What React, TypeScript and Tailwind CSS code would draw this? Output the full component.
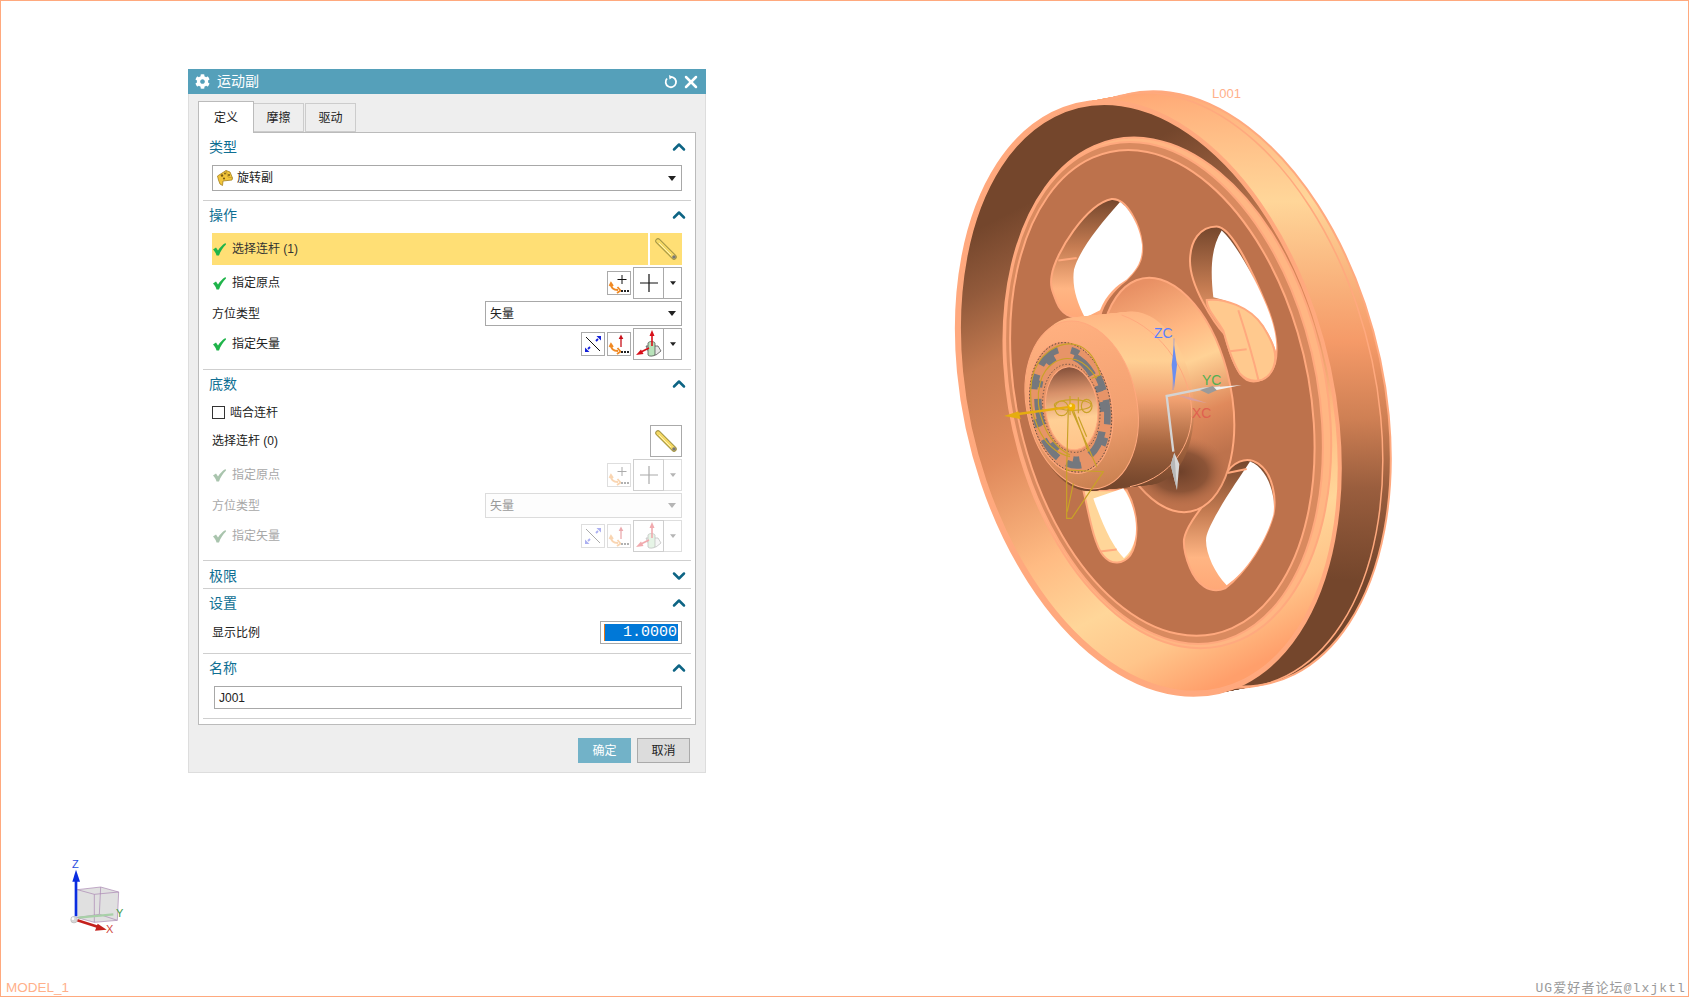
import { ChevronDown, ChevronUp, X } from 'lucide-react';
import { FaCog } from 'react-icons/fa';
import type { ReactNode } from 'react';

const edge = '#ffa97e';

function Rod() {
  return (
    <svg width="24" height="24" viewBox="0 0 24 24">
      <line x1="4" y1="4" x2="20" y2="20" stroke="#a39545" strokeWidth="5.500" strokeLinecap="round" />
      <line x1="4" y1="4" x2="20" y2="20" stroke="#f6da66" strokeWidth="3.500" strokeLinecap="round" />
      <line x1="5" y1="6" x2="17" y2="18" stroke="#fff3b8" strokeWidth="1" />
      <circle cx="20" cy="20" r="1.800" fill="#777" />
    </svg>
  );
}

function Tick({ off }: { off?: boolean }) {
  return (
    <svg width="13" height="13" viewBox="0 0 13 13" className="shrink-0">
      <path d="M0 6.500 L3 4.500 L5 7.500 C7 4.500 9 2 12.500 0 L13 1.500 C10 4.500 7.500 8 6 12.500 L3.500 12.500 C3 10 1.500 8 0 6.500 Z" fill={off ? '#a9c4ad' : '#1fb44a'} />
    </svg>
  );
}

function Caret({ off, small }: { off?: boolean; small?: boolean }) {
  return (
    <svg width={small ? 6 : 8} height={small ? 4 : 5} viewBox="0 0 8 5">
      <path d="M0 0 H8 L4 5 Z" fill={off ? '#b5b5b5' : '#222'} />
    </svg>
  );
}

function BentArrow() {
  return <path d="M3 12 C3 16 6 18 10 18 M9.500 15 L12.500 18.500 L9 21 M1.500 14 L3 11 L5 14" fill="none" stroke="#f08a24" strokeWidth="1.800" />;
}

function PointIcon() {
  return (
    <svg width="22" height="22" viewBox="0 0 22 22">
      <path d="M14 3 V12 M9.500 7.500 H18.500" stroke="#111" strokeWidth="1" />
      <BentArrow />
      <path d="M13 18 h2 v2 h-2z M16 18 h2 v2 h-2z M19 18 h2 v2 h-2z" fill="#222" />
    </svg>
  );
}

function CrossIcon() {
  return (
    <svg width="18" height="18" viewBox="0 0 18 18">
      <path d="M9 0 V18 M0 9 H18" stroke="#111" strokeWidth="1.200" />
    </svg>
  );
}

function TwoWayIcon() {
  return (
    <svg width="22" height="22" viewBox="0 0 22 22">
      <path d="M4 4 L18 18" stroke="#111" strokeWidth="1" />
      <path d="M14 8 L16 6 M8 14 L6 16" stroke="#1420d8" strokeWidth="1.800" />
      <path d="M14.500 3 L19 3 L19 7.500 Z M3 14.500 L3 19 L7.500 19 Z" fill="#1420d8" />
    </svg>
  );
}

function VecPointIcon() {
  return (
    <svg width="22" height="22" viewBox="0 0 22 22">
      <path d="M13 5 V14" stroke="#c8101a" strokeWidth="1.300" />
      <path d="M13 1.500 L15.300 6 H10.700 Z" fill="#c8101a" />
      <BentArrow />
      <path d="M13 18 h2 v2 h-2z M16 18 h2 v2 h-2z M19 18 h2 v2 h-2z" fill="#222" />
    </svg>
  );
}

function VectorIcon() {
  return (
    <svg width="26" height="28" viewBox="0 0 26 28">
      <path d="M10 16 L22 16 L25 21 L20 25 L14 25 Z" fill="#e6e6e6" stroke="#444" strokeWidth="0.700" />
      <path d="M12 13 C13 11 18 11 19 13 V25 C17 26.500 13 26.500 12 25 Z" fill="#b8e2ba" stroke="#444" strokeWidth="0.700" />
      <path d="M16 5 V16" stroke="#d8101a" strokeWidth="1.600" />
      <path d="M16 0 L18.500 6 H13.500 Z" fill="#d8101a" />
      <path d="M13 18 L5 22" stroke="#d8101a" strokeWidth="1.600" />
      <path d="M0 25 L5 19.500 L7.500 24 Z" fill="#d8101a" />
    </svg>
  );
}

function JointIcon() {
  return (
    <svg width="16" height="16" viewBox="0 0 16 16">
      <path d="M0.500 6 L9 0.500 L13 2 L15.500 8 L15 10 L6 11 L5.500 15.500 L3 14 L1.500 10 Z" fill="#f2c53a" stroke="#a5801f" strokeWidth="0.800" />
      <path d="M9 0.500 L11 7 L15.500 8" fill="none" stroke="#a5801f" strokeWidth="0.500" />
      <circle cx="5" cy="5.500" r="1.200" fill="#7a5c14" />
      <circle cx="8" cy="3.500" r="0.900" fill="#7a5c14" />
      <circle cx="7" cy="8.500" r="1.100" fill="#7a5c14" />
      <circle cx="12" cy="5" r="1" fill="#7a5c14" />
    </svg>
  );
}

function Select({ text, icon, off }: { text: string; icon?: ReactNode; off?: boolean }) {
  return (
    <div className={`flex h-full items-center justify-between border pl-[4px] pr-[5px] text-[12px] ${off ? 'border-[#dcdcdc] bg-[#fdfdfd] text-[#9a9a9a]' : 'border-[#a8a8a8] bg-white text-[#222]'}`}>
      <span className="flex items-center gap-[4px]">
        {icon}
        {text}
      </span>
      <Caret off={off} />
    </div>
  );
}

function ToolRow({ label, off, icons, large }: { label: string; off?: boolean; icons: ReactNode[]; large: ReactNode }) {
  const small = off ? 'border-[#dedede]' : 'border-[#aaaaaa]';
  const big = off ? 'border-[#cfcfcf]' : 'border-[#aaaaaa]';
  return (
    <div className="mt-[2px] flex h-[32px] items-center justify-between">
      <div className={`flex items-center gap-[6px] pl-[1px] text-[12px] ${off ? 'text-[#a8a8a8]' : 'text-[#222]'}`}>
        <Tick off={off} />
        {label}
      </div>
      <div className="flex items-center gap-[2px]">
        {icons.map((icon, i) => (
          <div key={i} className={`flex h-[24px] w-[24px] items-center justify-center border ${small} ${off ? '[&>svg]:opacity-35' : ''}`}>
            {icon}
          </div>
        ))}
        <div className="flex">
          <div className={`flex h-[32px] w-[31px] items-center justify-center border ${big} ${off ? '[&>svg]:opacity-35' : ''}`}>
            {large}
          </div>
          <div className={`flex h-[32px] w-[18px] items-center justify-center border border-l-0 ${off ? 'border-[#dedede]' : 'border-[#aaaaaa]'}`}>
            <Caret small off={off} />
          </div>
        </div>
      </div>
    </div>
  );
}

function Section({ title, open = true, children, gap = 9 }: { title: string; open?: boolean; children?: ReactNode; gap?: 8 | 9 }) {
  return (
    <section>
      <div className={`flex items-center justify-between pl-[10px] pr-[6px] text-[14px] text-[#0f6f93] ${open ? 'h-[30px] pb-[2px]' : 'h-[27px] pt-[3px]'}`}>
        {title}
        {open ? <ChevronUp size={20} strokeWidth={3} className="text-[#0d6484]" /> : <ChevronDown size={20} strokeWidth={3} className="text-[#0d6484]" />}
      </div>
      {children && <div className="px-[13px]">{children}</div>}
      <div className={`mx-[4px] h-px bg-[#cfcfcf] ${!children ? '' : gap === 8 ? 'mt-[8px]' : 'mt-[9px]'}`} />
    </section>
  );
}

function Dialog() {
  return (
    <div className="absolute left-[187px] top-[68px] flex h-[704px] w-[518px] flex-col border border-t-0 border-[#dddddd] bg-[#eeeeee] font-['Liberation_Sans','Noto_Sans_CJK_SC',sans-serif]">
      <div className="-mx-px flex h-[25px] shrink-0 items-center bg-[#55a0ba] pl-[7px] pr-[5px] text-[14px] text-white">
        <FaCog size={15} />
        <span className="ml-[7px]">运动副</span>
        <svg width="14" height="14" viewBox="0 0 14 14" className="ml-auto">
          <path d="M3 3.500 A5.200 5.200 0 1 0 7 1.800" fill="none" stroke="#fff" strokeWidth="1.800" />
          <path d="M5 0 L9 2 L5.500 4.500 Z" fill="#fff" />
        </svg>
        <X size={20} strokeWidth={3} className="ml-[3px]" />
      </div>

      <div className="flex h-[38px] shrink-0 items-end pl-[9px] text-[12px] text-[#222]">
        <div className="z-10 -mb-px flex h-[32px] w-[56px] items-center justify-center border border-b-0 border-[#bbbbbb] bg-white">定义</div>
        <div className="flex h-[29px] w-[50px] items-center justify-center border border-l-0 border-[#cccccc]">摩擦</div>
        <div className="ml-px flex h-[29px] w-[51px] items-center justify-center border border-[#cccccc]">驱动</div>
      </div>

      <div className="mx-[9px] h-[593px] shrink-0 border border-[#bbbbbb] bg-white">
        <Section title="类型">
          <div className="mt-[2px] h-[26px]">
            <Select text="旋转副" icon={<JointIcon />} />
          </div>
        </Section>

        <Section title="操作">
          <div className="mt-[2px] flex h-[32px] gap-[2px]">
            <div className="flex flex-1 items-center gap-[6px] bg-[#ffdf75] pl-[1px] text-[12px] text-[#333333]">
              <Tick />
              选择连杆 (1)
            </div>
            <div className="flex w-[32px] items-center justify-center bg-[#ffdf75]">
              <Rod />
            </div>
          </div>
          <ToolRow label="指定原点" icons={[<PointIcon key="p" />]} large={<CrossIcon />} />
          <div className="mt-[2px] flex h-[25px] items-center justify-between text-[12px] text-[#222]">
            方位类型
            <div className="h-full w-[197px]">
              <Select text="矢量" />
            </div>
          </div>
          <ToolRow label="指定矢量" icons={[<TwoWayIcon key="t" />, <VecPointIcon key="v" />]} large={<VectorIcon />} />
        </Section>

        <Section title="底数" gap={8}>
          <div className="flex h-[25px] items-center gap-[5px] text-[12px] text-[#222]">
            <span className="h-[13px] w-[13px] border border-[#333333] bg-white" />
            啮合连杆
          </div>
          <div className="flex h-[32px] items-center justify-between text-[12px] text-[#222]">
            选择连杆 (0)
            <div className="flex h-[32px] w-[32px] items-center justify-center border border-[#aaaaaa]">
              <Rod />
            </div>
          </div>
          <ToolRow off label="指定原点" icons={[<PointIcon key="p" />]} large={<CrossIcon />} />
          <div className="mt-[2px] flex h-[25px] items-center justify-between text-[12px] text-[#a8a8a8]">
            方位类型
            <div className="h-full w-[197px]">
              <Select off text="矢量" />
            </div>
          </div>
          <ToolRow off label="指定矢量" icons={[<TwoWayIcon key="t" />, <VecPointIcon key="v" />]} large={<VectorIcon />} />
        </Section>

        <Section title="极限" open={false} />

        <Section title="设置">
          <div className="mt-[2px] flex h-[23px] items-center justify-between text-[12px] text-[#222]">
            显示比例
            <div className="flex h-full w-[82px] items-center border border-[#a8a8a8] px-[3px]">
              <div className="h-[17px] w-[74px] overflow-hidden whitespace-nowrap border-l border-[#e8781a] bg-[#0078d7] pl-[18px] font-['Liberation_Mono',monospace] text-[15px] leading-[17px] text-white">
                1.0000
              </div>
            </div>
          </div>
        </Section>

        <Section title="名称">
          <div className="ml-[2px] mt-[2px] flex h-[23px] items-center border border-[#a8a8a8] pl-[4px] text-[12px] text-[#222]">J001</div>
        </Section>
      </div>

      <div className="flex justify-end gap-[6px] pr-[15px] pt-[13px] text-[12px]">
        <button className="h-[25px] w-[53px] bg-[#72b2c8] text-white">确定</button>
        <button className="h-[25px] w-[53px] border border-[#aaaaaa] bg-[#dcdcdc] text-[#222]">取消</button>
      </div>
    </div>
  );
}

function Pulley() {
  const sweep = Array.from({ length: 31 }, (_, i) => i / 30);
  const ns = { vectorEffect: 'non-scaling-stroke' as const };
  return (
    <svg className="absolute left-[929px] top-[68px] h-[638px] w-[480px]" viewBox="0 0 1440 1560" preserveAspectRatio="none">
      <defs>
        <linearGradient id="rimOut" gradientUnits="userSpaceOnUse" x1="0" y1="55" x2="0" y2="1500">
          <stop offset="0" stopColor="#ffa674" />
          <stop offset="0.3" stopColor="#ffd699" />
          <stop offset="0.57" stopColor="#f59a68" />
          <stop offset="0.7" stopColor="#cf8054" />
          <stop offset="0.81" stopColor="#9a5e3e" />
          <stop offset="0.94" stopColor="#74462c" />
          <stop offset="1" stopColor="#74462c" />
        </linearGradient>
        <linearGradient id="rimIn" gradientUnits="userSpaceOnUse" x1="0" y1="80" x2="0" y2="1530">
          <stop offset="0" stopColor="#74462c" />
          <stop offset="0.1" stopColor="#74462c" />
          <stop offset="0.2" stopColor="#925a3b" />
          <stop offset="0.32" stopColor="#c47a50" />
          <stop offset="0.48" stopColor="#e08a5c" />
          <stop offset="0.67" stopColor="#ffbb83" />
          <stop offset="0.8" stopColor="#ffd699" />
          <stop offset="0.9" stopColor="#ffc58a" />
          <stop offset="1" stopColor="#ff9f6b" />
        </linearGradient>
        <linearGradient id="wallDark" x1="0" y1="0" x2="0" y2="1">
          <stop offset="0" stopColor="#74462c" />
          <stop offset="0.4" stopColor="#c57c52" />
          <stop offset="0.75" stopColor="#ffb583" />
          <stop offset="1" stopColor="#ffa877" />
        </linearGradient>
        <linearGradient id="flange" gradientUnits="userSpaceOnUse" x1="0" y1="515" x2="0" y2="1080">
          <stop offset="0" stopColor="#e89064" />
          <stop offset="0.24" stopColor="#ffb782" />
          <stop offset="0.4" stopColor="#ffd296" />
          <stop offset="0.63" stopColor="#e08a5c" />
          <stop offset="0.83" stopColor="#bd724c" />
          <stop offset="1" stopColor="#bd724c" />
        </linearGradient>
        <radialGradient id="shade">
          <stop offset="0" stopColor="#6f412a" />
          <stop offset="0.55" stopColor="#7c4a30" stopOpacity="0.75" />
          <stop offset="1" stopColor="#bd724c" stopOpacity="0" />
        </radialGradient>
        <linearGradient id="barrel" gradientUnits="userSpaceOnUse" x1="0" y1="595" x2="0" y2="1030">
          <stop offset="0" stopColor="#ffb583" />
          <stop offset="0.35" stopColor="#ffd094" />
          <stop offset="0.58" stopColor="#f0a070" />
          <stop offset="0.82" stopColor="#a5653f" />
          <stop offset="1" stopColor="#74462c" />
        </linearGradient>
      </defs>

      {sweep.map((t) => (
        <ellipse key={t} cx={805 - 150 * t} cy={782 + 23 * t} rx="541" ry="755" transform={`rotate(-22.5 ${805 - 150 * t} ${782 + 23 * t})`} fill="url(#rimOut)" />
      ))}
      <ellipse cx="805" cy="782" rx="541" ry="755" transform="rotate(-22.5 805 782)" fill="none" stroke={edge} strokeWidth="2" {...ns} />
      <ellipse cx="781" cy="786" rx="541" ry="755" transform="rotate(-22.5 781 786)" fill="none" stroke={edge} strokeWidth="1.500" {...ns} />

      {/* front lip and inner cone of the rim */}
      <ellipse cx="655" cy="805" rx="541" ry="755" transform="rotate(-22.5 655 805)" fill="#ffa97e" stroke={edge} strokeWidth="2" {...ns} />
      <ellipse cx="658" cy="804" rx="531" ry="745" transform="rotate(-22.5 658 804)" fill="url(#rimIn)" stroke={edge} strokeWidth="1.500" {...ns} />

      <ellipse cx="712" cy="792" rx="468" ry="642" transform="rotate(-20 712 792)" fill="#ffb683" stroke={edge} strokeWidth="2" {...ns} />
      <ellipse cx="702" cy="792" rx="452" ry="632" transform="rotate(-20 702 792)" fill="#d98a5f" stroke={edge} strokeWidth="2" {...ns} />
      <ellipse cx="697" cy="792" rx="432" ry="612" transform="rotate(-20 697 792)" fill="#bd724c" stroke={edge} strokeWidth="2" {...ns} />

      {/* top left hole */}
      <path d="M365 505 C375 450 470 330 545 318 C590 315 630 380 636 430 C640 470 620 490 590 515 C550 540 520 570 510 605 L465 610 C420 610 395 600 380 570 C365 540 360 530 365 505 Z" fill="url(#wallDark)" stroke={edge} strokeWidth="2" {...ns} />
      <path d="M570 325 C600 340 632 390 636 430 C638 470 620 490 590 515 C560 530 530 550 510 590 L465 608 C440 570 425 530 432 490 C450 440 510 380 570 325 Z" fill="#ffffff" />
      <path d="M385 468 L440 462" stroke={edge} strokeWidth="2" {...ns} />

      {/* top right hole */}
      <path d="M780 470 C780 420 810 385 860 385 C900 385 960 480 1010 580 C1040 640 1045 690 1035 720 C1020 760 975 770 950 760 C920 745 900 700 885 650 C850 620 780 530 780 470 Z" fill="url(#wallDark)" stroke={edge} strokeWidth="2" {...ns} />
      <path d="M875 395 C910 420 970 500 1010 580 C1030 620 1042 660 1038 690 C1010 620 960 580 850 558 C842 500 840 440 875 395 Z" fill="#ffffff" />
      <path d="M830 565 C880 560 960 580 1000 630 C1030 670 1045 700 1030 730 C1010 770 960 770 930 745 C910 720 890 670 880 640 C860 610 830 590 830 565 Z" fill="#ffc98e" stroke={edge} strokeWidth="2" {...ns} />
      <path d="M900 690 L950 685 M925 590 C945 640 965 690 985 760" fill="none" stroke={edge} strokeWidth="2" {...ns} />

      {/* bottom right hole */}
      <path d="M762 1150 C770 1110 830 1060 880 1000 C905 960 950 945 985 965 C1030 990 1040 1050 1030 1090 C1010 1150 950 1230 885 1270 C840 1285 800 1260 780 1220 C765 1190 760 1170 762 1150 Z" fill="url(#wallDark)" stroke={edge} strokeWidth="2" {...ns} />
      <path d="M960 960 C1010 975 1040 1040 1030 1090 C1010 1150 950 1230 890 1262 C850 1230 820 1170 830 1140 C850 1090 920 1010 960 960 Z" fill="#ffffff" />
      <path d="M892 988 L950 978" stroke={edge} strokeWidth="2" {...ns} />

      {/* bottom left hole */}
      <path d="M460 1030 C475 1080 490 1160 520 1190 C545 1215 580 1210 600 1190 C625 1160 630 1090 590 1030 Z" fill="#ffd699" stroke={edge} strokeWidth="2" {...ns} />
      <path d="M580 1025 C610 1060 625 1110 615 1150 C605 1180 590 1190 582 1196 C550 1170 520 1120 490 1050 Z" fill="#ffffff" />
      <path d="M510 1180 L560 1175" stroke={edge} strokeWidth="2" {...ns} />

      <ellipse cx="710" cy="797" rx="190" ry="295" transform="rotate(-18 710 797)" fill="url(#flange)" stroke={edge} strokeWidth="2" {...ns} />
      <ellipse cx="750" cy="985" rx="150" ry="88" fill="url(#shade)" />
      {sweep.map((t) => (
        <ellipse key={t} cx={630 - 175 * t} cy={805 + 15 * t} rx="158" ry="215" transform={`rotate(-14 ${630 - 175 * t} ${805 + 15 * t})`} fill="url(#barrel)" />
      ))}
    </svg>
  );
}

function HubFace() {
  return (
    <svg className="absolute left-[989px] top-[309px] h-[230px] w-[270px]" viewBox="0 0 810 690">
      <defs>
        <linearGradient id="fillet" x1="0" y1="0" x2="0" y2="1">
          <stop offset="0" stopColor="#ffb080" />
          <stop offset="0.6" stopColor="#f2a070" />
          <stop offset="1" stopColor="#c98050" />
        </linearGradient>
        <linearGradient id="bore" x1="0" y1="0" x2="0" y2="1">
          <stop offset="0" stopColor="#84503a" />
          <stop offset="0.3" stopColor="#d8916a" />
          <stop offset="0.62" stopColor="#ffcf95" />
          <stop offset="1" stopColor="#ffc48a" />
        </linearGradient>
      </defs>
      <path d="M395 15 C520 60 610 200 605 320 C600 430 520 510 420 530" fill="none" stroke={edge} strokeWidth="3" />
      <ellipse cx="275" cy="285" rx="165" ry="255" transform="rotate(-12 275 285)" fill="url(#fillet)" stroke={edge} strokeWidth="3" />
      <ellipse cx="242" cy="292" rx="124" ry="200" transform="rotate(-10 242 292)" fill="#e79468" stroke={edge} strokeWidth="3" />
      <g fill="none" stroke="#75787e" transform="rotate(-10 242 292)">
        <ellipse cx="242" cy="292" rx="108" ry="176" strokeWidth="20" strokeDasharray="70 40 25 90 45 30" />
        <ellipse cx="242" cy="292" rx="96" ry="160" strokeWidth="22" strokeDasharray="30 60 80 35 20 55" />
      </g>
      <ellipse cx="242" cy="292" rx="120" ry="196" transform="rotate(-10 242 292)" fill="none" stroke="#333333" strokeWidth="2.500" strokeDasharray="4 6" />
      <ellipse cx="244" cy="295" rx="85" ry="133" transform="rotate(-8 244 295)" fill="#e79468" stroke="#333333" strokeWidth="2" strokeDasharray="4 6" />
      <ellipse cx="245" cy="295" rx="78" ry="125" transform="rotate(-6 245 295)" fill="url(#bore)" stroke={edge} strokeWidth="3" />

      <g fill="none" stroke="#c9a227" strokeWidth="3.500">
        <path d="M240 440 C150 420 110 300 125 210 C140 130 210 90 260 105 C295 115 320 150 330 195 L305 205" />
        <path d="M240 435 C170 400 130 300 150 220 C165 160 215 135 260 150 C290 160 310 190 320 205" />
        <path d="M230 480 L340 485 L245 625 L230 625 Z M250 520 L232 605" />
        <path d="M235 295 L230 480 M250 300 L295 425 M245 300 L320 470 M265 320 L290 380" />
        <ellipse cx="248" cy="285" rx="55" ry="16" />
        <ellipse cx="215" cy="295" rx="20" ry="22" />
        <ellipse cx="290" cy="288" rx="16" ry="20" />
        <path d="M240 258 V315 M265 262 V310" />
      </g>
      <path d="M245 290 L85 312" stroke="#e5ad10" strokeWidth="7" />
      <path d="M42 318 L85 304 L92 327 Z" fill="#e5ad10" />
      <circle cx="245" cy="291" r="11" fill="#f0b400" />
      <circle cx="242" cy="287" r="4" fill="#ffe58a" />

      <path d="M690 232 L640 236 L530 258 L550 425" fill="none" stroke="#d4d4d4" strokeWidth="7" />
      <path d="M630 240 L668 228 L682 240 L655 252 Z" fill="#9a9a9a" />
      <path d="M672 232 L755 225 L680 240 Z" fill="#f2f2f2" />
      <path d="M552 85 L549 240" stroke="#5a80ff" strokeWidth="1.500" />
      <path d="M552 105 L561 165 L552 235 L545 165 Z" fill="#6b8ef0" />
      <path d="M562 256 L600 262 L652 280 L600 270 Z" fill="#d9a0a0" />
      <path d="M553 428 L568 462 L561 540 L542 465 Z" fill="#d8d8d8" />
      <path d="M553 428 L542 465 L561 540 Z" fill="#b8b8b8" />
    </svg>
  );
}

function Triad() {
  return (
    <svg className="absolute left-[59px] top-[856px] h-[80px] w-[70px]" viewBox="180 50 210 240">
      <path d="M232 148 L302 140 L356 155 L352 240 L283 246 L232 232 Z" fill="#d8d8d8" opacity="0.8" />
      <path d="M232 148 L302 140 L356 155 L352 240 L283 246 L232 232 M232 148 L283 162 L356 155 M283 162 L283 246 M302 140 L298 222 L352 240 M298 222 L232 232" fill="none" stroke="#a884b0" strokeWidth="2" />
      <path d="M235 232 L340 222" stroke="#a8d0a8" strokeWidth="7" />
      <path d="M228 228 V118" stroke="#0a2de0" strokeWidth="8" />
      <path d="M228 88 L240 124 H217 Z" fill="#0a2de0" />
      <path d="M232 240 L295 260" stroke="#c4201c" strokeWidth="8" />
      <path d="M320 268 L285 271 L293 250 Z" fill="#c4201c" />
      <circle cx="222" cy="238" r="10" fill="#d6d6d6" stroke="#9a9a9a" />
      <circle cx="219" cy="235" r="4" fill="#ffffff" />
    </svg>
  );
}

export default function App() {
  return (
    <div className="relative h-[997px] w-[1689px] overflow-hidden border border-[#ffa97e] bg-white font-['Liberation_Sans',sans-serif]">
      <Pulley />
      <HubFace />
      <Triad />

      <span className="absolute left-[1211px] top-[86px] text-[13px] leading-[14px] text-[#ffb08a]">L001</span>
      <span className="absolute left-[1153px] top-[325px] text-[14px] leading-[14px] text-[#5a80ff]">ZC</span>
      <span className="absolute left-[1201px] top-[372px] text-[14px] leading-[14px] text-[#52b052]">YC</span>
      <span className="absolute left-[1191px] top-[405px] text-[14px] leading-[14px] text-[#e0604f]">XC</span>
      <span className="absolute left-[71px] top-[858px] text-[11px] leading-[11px] text-[#2b4fe0]">Z</span>
      <span className="absolute left-[105px] top-[923px] text-[11px] leading-[11px] text-[#d04a40]">X</span>
      <span className="absolute left-[115px] top-[907px] text-[11px] leading-[11px] text-[#3f9a4a]">Y</span>

      <span className="absolute bottom-0 left-[5px] text-[13.500px] leading-[16px] text-[#ffb08a]">MODEL_1</span>
      <span className="absolute bottom-[-2px] right-[2px] whitespace-nowrap font-['Liberation_Mono','Noto_Sans_CJK_SC',monospace] text-[13px] leading-[18px] tracking-[1.100px] text-[#9a9a9a]">
        UG爱好者论坛@lxjktl
      </span>

      <Dialog />
    </div>
  );
}
